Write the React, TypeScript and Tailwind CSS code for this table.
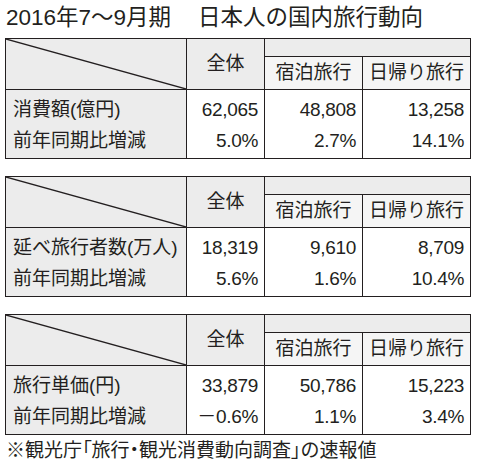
const font = "font-['Liberation_Sans','Noto_Sans_CJK_JP',sans-serif]";

interface Row {
  label: string;
  values: string[];
}

interface Table {
  rows: Row[];
}

const tables: Table[] = [
  {
    rows: [
      { label: "消費額(億円)", values: ["62,065", "48,808", "13,258"] },
      { label: "前年同期比増減", values: ["5.0%", "2.7%", "14.1%"] },
    ],
  },
  {
    rows: [
      { label: "延べ旅行者数(万人)", values: ["18,319", "9,610", "8,709"] },
      { label: "前年同期比増減", values: ["5.6%", "1.6%", "10.4%"] },
    ],
  },
  {
    rows: [
      { label: "旅行単価(円)", values: ["33,879", "50,786", "15,223"] },
      { label: "前年同期比増減", values: ["－0.6%", "1.1%", "3.4%"] },
    ],
  },
];

const line = "border-[#231f20]";

const TrendTable = ({ table }: { table: Table }) => {
  return (
    <div className={`ml-[5px] w-[466px] border-[1.5px] ${line} text-[19px] text-[#231f20]`}>
      {/* header */}
      <div className="grid grid-cols-[181px_78px_1fr] grid-rows-[18px_33px]">
        <div className={`row-span-2 relative bg-[#ececec] border-r-[1.5px] border-b-[1.5px] ${line}`}>
          <svg className="absolute inset-0 w-full h-full" preserveAspectRatio="none" viewBox="0 0 100 100">
            <line x1="0" y1="0" x2="100" y2="100" stroke="#231f20" strokeWidth="1.3" vectorEffect="non-scaling-stroke" />
          </svg>
        </div>
        <div className={`row-span-2 flex items-center justify-center bg-[#ececec] border-r-[1.5px] border-b-[1.5px] ${line}`}>
          全体
        </div>
        <div className={`bg-[#ececec] border-b-[1.5px] ${line}`} />
        <div className="grid grid-cols-[98px_1fr]">
          <div className={`flex items-center justify-center bg-[#f5f5f5] border-r-[1.5px] border-b-[1.5px] ${line}`}>
            宿泊旅行
          </div>
          <div className={`flex items-center justify-center bg-[#f5f5f5] border-b-[1.5px] ${line}`}>
            日帰り旅行
          </div>
        </div>
      </div>
      {/* data */}
      <div className="grid grid-cols-[181px_78px_98px_1fr]">
        <div className={`bg-[#ececec] border-r-[1.5px] ${line} pl-[7px] pt-[4px] pb-[2px]`}>
          {table.rows.map((r, i) => (
            <div key={i} className="h-[31px] leading-[31px] whitespace-nowrap">
              {r.label}
            </div>
          ))}
        </div>
        {[0, 1, 2].map((c) => (
          <div
            key={c}
            className={`bg-white ${c < 2 ? `border-r-[1.5px] ${line}` : ""} pr-[6px] pt-[4px] pb-[2px] text-right tracking-[-0.3px]`}
          >
            {table.rows.map((r, i) => (
              <div key={i} className="h-[31px] leading-[31px]">
                {r.values[c]}
              </div>
            ))}
          </div>
        ))}
      </div>
    </div>
  );
};

export default function App() {
  return (
    <div className={`w-[480px] h-[460px] bg-white ${font} text-[#231f20] overflow-hidden`}>
      <div className="h-[38px] pl-[6px] pt-[3px] text-[22.5px] leading-[30px] whitespace-nowrap">
        2016年7〜9月期<span className="ml-[27px]">日本人の国内旅行動向</span>
      </div>
      <div className="flex flex-col gap-[17px]">
        {tables.map((t, i) => (
          <TrendTable key={i} table={t} />
        ))}
      </div>
      <div className="pl-[6px] pt-[3px] text-[19px] leading-[26px] whitespace-nowrap">
        ※観光庁<span className="[font-feature-settings:'palt']">「</span>旅行
        <span className="[font-feature-settings:'palt']">・</span>観光消費動向調査
        <span className="[font-feature-settings:'palt']">」</span>の速報値
      </div>
    </div>
  );
}
